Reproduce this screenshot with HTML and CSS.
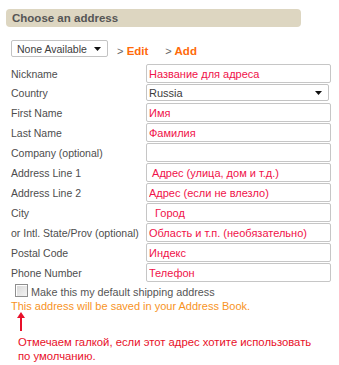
FILE: index.html
```html
<!DOCTYPE html>
<html lang="en">
<head>
<meta charset="utf-8">
<title>Choose an address</title>
<link rel="stylesheet" href="styles.css">
</head>
<body>
<div class="page">
  <div class="header">Choose an address</div>

  <div class="chooser">
    <div class="select select-small">
      <span>None Available</span>
      <svg class="caret" width="7" height="4" viewBox="0 0 7 4"><path d="M0 0H7L3.5 4Z" fill="#111"/></svg>
    </div>
    <a class="action"><span class="gt">&gt;</span> Edit</a>
    <a class="action"><span class="gt">&gt;</span> Add</a>
  </div>

  <div class="form">
    <label class="lbl">Nickname</label>
    <input class="field" value="Название для адреса">

    <label class="lbl">Country</label>
    <div class="select select-country">
      <span>Russia</span>
      <svg class="caret" width="7" height="4" viewBox="0 0 7 4"><path d="M0 0H7L3.5 4Z" fill="#111"/></svg>
    </div>

    <label class="lbl">First Name</label>
    <input class="field" value="Имя">

    <label class="lbl">Last Name</label>
    <input class="field" value="Фамилия">

    <label class="lbl">Company (optional)</label>
    <input class="field" value="">

    <label class="lbl">Address Line 1</label>
    <input class="field" value=" Адрес (улица, дом и т.д.)">

    <label class="lbl">Address Line 2</label>
    <input class="field" value="Адрес (если не влезло)">

    <label class="lbl">City</label>
    <input class="field" value="  Город">

    <label class="lbl">or Intl. State/Prov (optional)</label>
    <input class="field" value="Область и т.п. (необязательно)">

    <label class="lbl">Postal Code</label>
    <input class="field" value="Индекс">

    <label class="lbl">Phone Number</label>
    <input class="field" value="Телефон">
  </div>

  <div class="check">
    <span class="box"></span>
    <span class="check-text">Make this my default shipping address</span>
  </div>

  <div class="note">This address will be saved in your Address Book.</div>

  <svg class="arrow" width="10" height="19" viewBox="0 0 10 19">
    <path d="M5 4V19" stroke="#e8102a" stroke-width="2"/>
    <path d="M1 6L5 0L9 6Z" fill="#e8102a"/>
  </svg>

  <div class="annotation">Отмечаем галкой, если этот адрес хотите использовать<br>по умолчанию.</div>
</div>
</body>
</html>
```

FILE: styles.css
```css
html, body {
  margin: 0;
  padding: 0;
  background: #ffffff;
}

.page {
  font-family: "Liberation Sans", Arial, sans-serif;
  font-size: 10.5px;
  color: #4d4d4d;
  padding-top: 9px;
}

.header {
  margin-left: 6px;
  width: 289px;
  height: 18px;
  line-height: 18px;
  padding-left: 6px;
  background: #ddd6c1;
  border-radius: 4px;
  font-size: 11.5px;
  font-weight: bold;
  color: #555555;
}

.chooser {
  display: flex;
  align-items: flex-end;
  margin-top: 13px;
  padding-left: 11px;
  height: 17px;
}

.select {
  box-sizing: border-box;
  display: flex;
  align-items: center;
  justify-content: space-between;
  height: 17px;
  border: 1px solid #c3c3c3;
  border-radius: 2px;
  background: #fff;
  color: #3c3c3c;
  padding: 0 6px 0 3px;
}

.select-small {
  width: 97px;
  padding-left: 5px;
}

.select-country {
  width: 183px;
  padding-left: 2px;
  padding-right: 6px;
  font-size: 11px;
  margin-bottom: 1px;
}

.caret {
  display: block;
}

.action {
  font-size: 11.5px;
  font-weight: bold;
  color: #ff6a0a;
  line-height: 14px;
  margin-bottom: -1px;
}

.action:first-of-type {
  margin-left: 9px;
}

.action + .action {
  margin-left: 17px;
}

.gt {
  font-weight: normal;
  color: #666;
  font-size: 11px;
}

.form {
  display: grid;
  grid-template-columns: 135px 185px;
  row-gap: 1px;
  margin-top: 7px;
  padding-left: 11px;
  align-items: center;
}

.lbl {
  color: #4d4d4d;
  white-space: nowrap;
  line-height: 13px;
  padding-top: 1px;
}

.field {
  box-sizing: border-box;
  width: 185px;
  height: 19px;
  margin: 0;
  padding: 0 2px;
  border: 1px solid #c6c6c6;
  border-radius: 2px;
  background: #fff;
  font-family: "Liberation Sans", Arial, sans-serif;
  font-size: 11px;
  color: #f0124a;
  outline: none;
  white-space: pre;
}

.check {
  display: flex;
  align-items: center;
  margin-top: 2px;
  padding-left: 15px;
  height: 13px;
}

.box {
  box-sizing: border-box;
  width: 13px;
  height: 13px;
  border: 1px solid #8e8e8e;
  background: linear-gradient(135deg, #d6d6d6 0%, #f4f4f4 100%);
  box-shadow: inset 1px 1px 0 #ffffff;
}

.check-text {
  margin-left: 3px;
  font-size: 10.8px;
  color: #555;
  line-height: 13px;
  padding-top: 3px;
}

.note {
  margin-top: 3px;
  padding-left: 11px;
  font-size: 11px;
  line-height: 13px;
  color: #f7931e;
}

.arrow {
  display: block;
  margin-top: -1px;
  margin-left: 16px;
}

.annotation {
  margin-top: 5px;
  padding-left: 18px;
  font-size: 11.3px;
  line-height: 13.5px;
  color: #e8102a;
}
```
